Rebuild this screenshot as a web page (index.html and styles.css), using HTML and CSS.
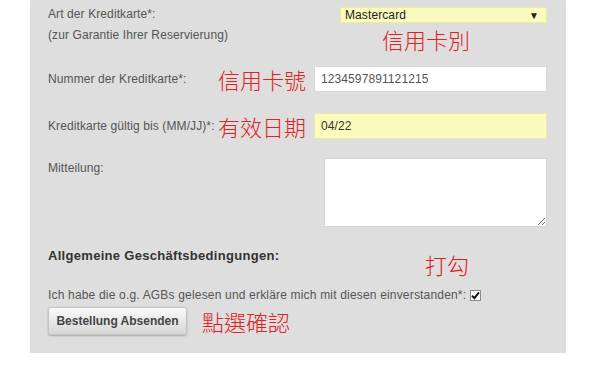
FILE: index.html
```html
<!doctype html>
<html lang="de">
<head>
  <meta charset="utf-8">
  <title>Bestellung</title>
  <link rel="stylesheet" href="styles.css">
</head>
<body>
  <!-- Zahlungsformular -->
  <form class="panel">
    <div class="row row-card">
      <div class="label label-card">
        Art der Kreditkarte*:<br>
        (zur Garantie Ihrer Reservierung)
      </div>
      <div class="field-col">
        <div class="select">
          <span>Mastercard</span>
          <span class="arrow">&#9660;</span>
        </div>
        <div class="note note-card">信用卡別</div>
      </div>
    </div>

    <div class="row row-number">
      <div class="label label-short">Nummer der Kreditkarte*:</div>
      <div class="note note-inline">信用卡號</div>
      <div class="input">1234597891121215</div>
    </div>

    <div class="row row-date">
      <div class="label label-short">Kreditkarte gültig bis (MM/JJ)*:</div>
      <div class="note note-inline">有效日期</div>
      <div class="input input-yellow">04/22</div>
    </div>

    <div class="row row-message">
      <div class="label label-message">Mitteilung:</div>
      <textarea class="textarea"></textarea>
    </div>

    <div class="row row-terms">
      <div class="terms-title">Allgemeine Geschäftsbedingungen:</div>
      <div class="note note-check">打勾</div>
    </div>

    <div class="row row-agree">
      <span class="label label-agree">Ich habe die o.g. AGBs gelesen und erkläre mich mit diesen einverstanden*:</span>
      <span class="checkbox">
        <svg width="9" height="9" viewBox="0 0 9 9"><path d="M1 4.6 L3.4 7.2 L8 1.4" fill="none" stroke="#111" stroke-width="1.9"/></svg>
      </span>
    </div>

    <div class="row row-submit">
      <button type="button" class="button">Bestellung Absenden</button>
      <div class="note note-submit">點選確認</div>
    </div>
  </form>
</body>
</html>
```

FILE: styles.css
```css
/*----------------------------------------------
 * BASIS
 *----------------------------------------------*/
body {
  margin: 0;
  background: #fff;
  font-family: "Liberation Sans", Arial, sans-serif;
  font-size: 12px;
  letter-spacing: 0.1px;
  color: #555;
}

/* graues Formularfeld */
.panel {
  width: 499px;
  margin-left: 30px;
  padding: 4px 19px 18px 18px;
  background: #dedede;
  box-shadow: 0 1px 1px #e8e8e8;
}

.row {
  display: flex;
}

.label {
  line-height: 18px;
}

/* rote Anmerkungen */
.note {
  font-family: "Noto Sans CJK TC", "Noto Sans CJK SC", sans-serif;
  font-size: 22px;
  font-weight: 300;
  line-height: 26px;
  letter-spacing: 0;
  color: #dc2222;
}

/*----------------------------------------------
 * KREDITKARTE
 *----------------------------------------------*/
.label-card {
  width: 292px;
  line-height: 21px;
}

.field-col {
  display: flex;
  flex-direction: column;
  padding-top: 3px;
}

.select {
  display: flex;
  justify-content: space-between;
  align-items: center;
  box-sizing: border-box;
  width: 207px;
  height: 16px;
  padding: 0 7px 0 4px;
  background: #fbfbbd;
  border: 1px solid #ecec9e;
  color: #222;
}

.arrow {
  font-size: 10px;
}

.note-card {
  margin: 3px 0 0 42px;
}

.row-number,
.row-date {
  align-items: center;
}

.row-number {
  margin-top: 14px;
}

.row-date {
  margin-top: 21px;
}

.label-short {
  width: 170px;
  white-space: nowrap;
}

.note-inline {
  width: 96px;
}

.input {
  box-sizing: border-box;
  width: 233px;
  height: 26px;
  padding: 0 6px;
  line-height: 24px;
  background: #fff;
  border: 1px solid #d8d8d8;
  color: #555;
}

.input-yellow {
  background: #fbfbbd;
  border-color: #e8e8b0;
  color: #333;
}

/*----------------------------------------------
 * MITTEILUNG
 *----------------------------------------------*/
.row-message {
  margin-top: 19px;
}

.label-message {
  width: 276px;
  padding-top: 1px;
}

.textarea {
  box-sizing: border-box;
  width: 223px;
  height: 69px;
  margin: 0;
  padding: 4px;
  background: #fff;
  border: 1px solid #d4d4d4;
  border-radius: 0;
  font: inherit;
}

/*----------------------------------------------
 * AGB
 *----------------------------------------------*/
.row-terms {
  margin-top: 20px;
}

.terms-title {
  width: 377px;
  font-size: 13px;
  font-weight: bold;
  letter-spacing: 0.3px;
  line-height: 18px;
  color: #333;
}

.note-check {
  margin-top: 4px;
}

.row-agree {
  align-items: center;
  margin-top: 9px;
}

.label-agree {
  letter-spacing: 0.18px;
}

.checkbox {
  display: flex;
  align-items: center;
  justify-content: center;
  width: 9px;
  height: 9px;
  margin-left: 4px;
  background: #fff;
  border: 1px solid #8a8a8a;
}

.row-submit {
  align-items: center;
  margin-top: 3px;
}

.button {
  width: 139px;
  height: 28px;
  padding: 0;
  background: linear-gradient(#fafafa, #d6d6d6);
  border: 1px solid #c4c4c4;
  border-radius: 3px;
  box-shadow: 0 1px 2px rgba(0, 0, 0, 0.25);
  font-family: "Liberation Sans", Arial, sans-serif;
  font-size: 12px;
  font-weight: bold;
  color: #444;
}

.note-submit {
  margin-left: 15px;
}
```
